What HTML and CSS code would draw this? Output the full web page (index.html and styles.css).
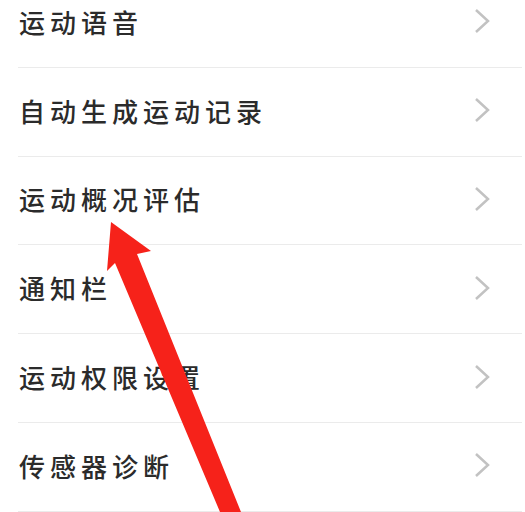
FILE: index.html
```html
<!DOCTYPE html>
<html lang="zh-CN">
<head>
    <meta charset="UTF-8">
    <meta name="viewport" content="width=device-width, initial-scale=1.0">
    <title>运动设置</title>
    <link rel="stylesheet" href="styles.css">
</head>
<body>
    <ul class="settings">
        <li class="row"><span class="label">运动语音</span><svg class="chev" viewBox="0 0 16 26"><polyline points="2,2 14,13 2,24"/></svg></li>
        <li class="row"><span class="label">自动生成运动记录</span><svg class="chev" viewBox="0 0 16 26"><polyline points="2,2 14,13 2,24"/></svg></li>
        <li class="row"><span class="label">运动概况评估</span><svg class="chev" viewBox="0 0 16 26"><polyline points="2,2 14,13 2,24"/></svg></li>
        <li class="row"><span class="label">通知栏</span><svg class="chev" viewBox="0 0 16 26"><polyline points="2,2 14,13 2,24"/></svg></li>
        <li class="row"><span class="label">运动权限设置</span><svg class="chev" viewBox="0 0 16 26"><polyline points="2,2 14,13 2,24"/></svg></li>
        <li class="row"><span class="label">传感器诊断</span><svg class="chev" viewBox="0 0 16 26"><polyline points="2,2 14,13 2,24"/></svg></li>
    </ul>

    <!-- annotation arrow drawn over the list -->
    <svg class="arrow" viewBox="0 0 525 512">
        <polygon points="111,222 151,251 137,254 241,512 220,512 115,263 107,271"/>
    </svg>
</body>
</html>
```

FILE: styles.css
```css
html, body {
    margin: 0;
    padding: 0;
    background: #fff;
    overflow: hidden;
}
body {
    position: relative;
    width: 525px;
    height: 512px;
    font-family: "Noto Sans CJK SC", "Noto Sans", sans-serif;
    color: #2b2b2b;
}
.settings {
    list-style: none;
    margin: -21px 3px 0 18px;
    padding: 0;
}
.row {
    display: flex;
    align-items: center;
    justify-content: space-between;
    box-sizing: border-box;
    height: 88.8px;
    border-bottom: 1px solid #ebebeb;
    padding: 0 32px 3px 1px;
}
.label {
    font-size: 26px;
    font-weight: 500;
    letter-spacing: 5px;
}
.chev {
    width: 16px;
    height: 26px;
}
.chev polyline {
    fill: none;
    stroke: #c2c2c2;
    stroke-width: 2.5;
}
.arrow {
    position: absolute;
    left: 0;
    top: 0;
    width: 525px;
    height: 512px;
}
.arrow polygon {
    fill: #f6221a;
}
```
